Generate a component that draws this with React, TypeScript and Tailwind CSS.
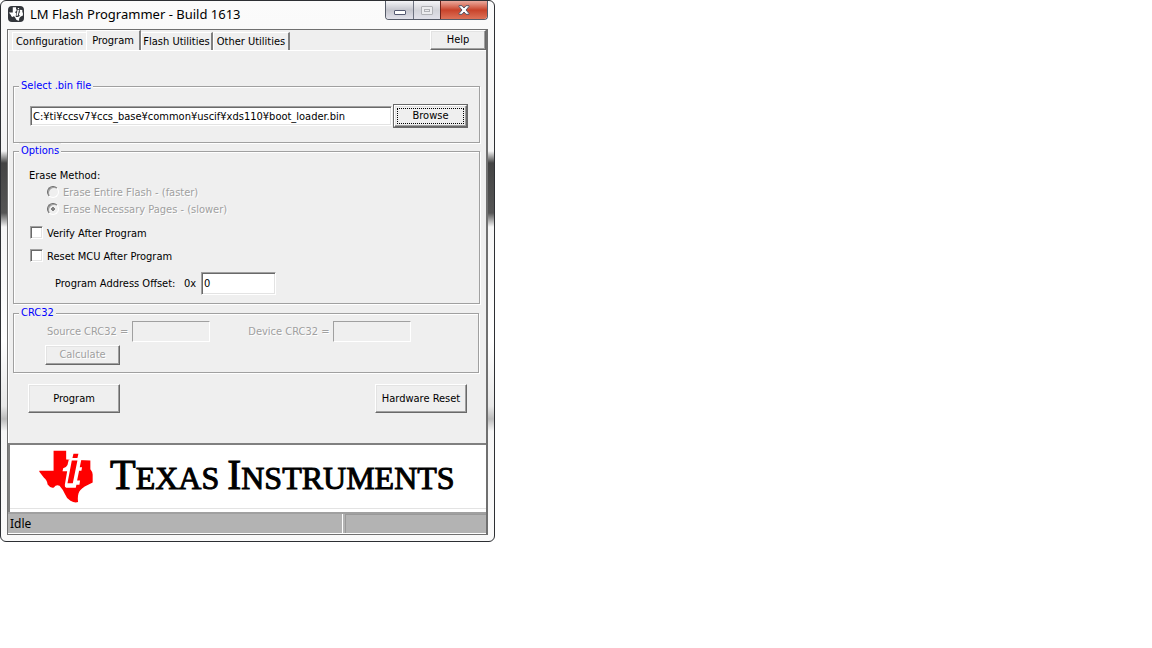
import type { ReactNode } from "react";
import clsx from "clsx";

const TABS = ["Configuration", "Program", "Flash Utilities", "Other Utilities"];

const RAISED =
  "border border-t-white border-l-white border-r-[#696969] border-b-[#696969] bg-[#efefef] shadow-[inset_-1px_-1px_0_#a0a0a0,inset_1px_1px_0_#e3e3e3]";
const SUNKEN =
  "border border-t-[#a0a0a0] border-l-[#a0a0a0] border-r-white border-b-white bg-white shadow-[inset_1px_1px_0_#696969,inset_-1px_-1px_0_#e3e3e3]";
const DISABLED_TEXT = "text-[#a0a0a0] [text-shadow:1px_1px_0_#fff]";

function TexasMark({ className, fill, ink }: { className?: string; fill: string; ink: string }) {
  return (
    <svg viewBox="26 15 163 158" className={className} aria-hidden="true">
      <path
        fill={fill}
        d="M70 16H108V43L181 46V72Q188 80 188 88V112L164 124Q148 134 145 146Q142 158 144 171Q134 175 121 167Q109 160 105 148Q99 134 88 122Q78 117 71 127Q62 131 52 118Q50 104 41 98L27 80V77H70Z"
      />
      <path
        fill={ink}
        d="M124 20H149L145 42H154L149 66H156L154 77H147L141 106H150L148 119H139L137 128H108Q103 126 104 119L111 78H97L99 69Q109 66 112 59L116 43H120Z"
      />
      <path fill={fill} d="M130 25H145L142 38H127ZM125 46H142L128 114H112Z" />
    </svg>
  );
}

function TitleBar() {
  return (
    <header className="flex h-7 items-start justify-between">
      <div className="flex items-center gap-[6px] pt-[5px] pl-px">
        <span className="flex size-4 items-center justify-center rounded-sm bg-[#33363b]">
          <TexasMark className="size-[14px]" fill="#fff" ink="#33363b" />
        </span>
        <h1 className="font-['Noto_Sans',sans-serif] text-[13px] leading-4">LM Flash Programmer - Build 1613</h1>
      </div>
      <div className="flex h-[19px] overflow-hidden rounded-b border border-t-0 border-[#555b68]">
        <button
          type="button"
          aria-label="Minimize"
          className="flex w-7 items-center justify-center border-r border-[#6d7280] bg-linear-to-b from-[#f5f5f8] via-[#c4c5cd] via-50% to-[#e1e1ea]"
        >
          <span className="mt-1 h-[5px] w-3 rounded-[1px] border border-[#555a72] bg-white" />
        </button>
        <button
          type="button"
          disabled
          aria-label="Maximize"
          className="flex w-[26px] items-center justify-center bg-linear-to-b from-[#f5f5f8] via-[#d3d4da] via-50% to-[#e1e1ea]"
        >
          <span className="flex h-[9px] w-3 items-center justify-center rounded-[1px] border border-[#b0b1b6] bg-[#ececef]">
            <span className="h-[3px] w-[6px] border border-[#b0b1b6]" />
          </span>
        </button>
        <button
          type="button"
          aria-label="Close"
          className="flex w-[47px] items-center justify-center border-l border-[#70251c] bg-linear-to-b from-[#eaa99d] via-[#c8422a] via-50% to-[#dd7258]"
        >
          <svg viewBox="0 0 12 10" className="h-[10px] w-3" aria-hidden="true">
            <path
              d="M1 .7H4L6 3L8 .7H11V1.5L8 5L11 8.500V9.300H8L6 7L4 9.300H1V8.500L4 5L1 1.500Z"
              fill="#fff"
              stroke="#535666"
            />
          </svg>
        </button>
      </div>
    </header>
  );
}

function TabBar() {
  return (
    <nav className="flex items-end justify-between">
      <div className="flex flex-1 items-end pl-[3px]" role="tablist">
        {TABS.map((tab) => (
          <button
            key={tab}
            type="button"
            role="tab"
            aria-selected={tab === "Program"}
            className={clsx(
              "border-t border-l border-white whitespace-nowrap",
              tab === "Configuration" && "h-[18px] w-[74px] pt-px",
              tab === "Program" && "h-5 w-[55px] border-r-2 border-r-[#808080]",
              tab === "Flash Utilities" && "h-[18px] w-[72px] border-r-2 border-r-[#808080] pt-px",
              tab === "Other Utilities" && "h-[18px] w-[77px] border-r-2 border-r-[#808080] pt-px",
            )}
          >
            {tab}
          </button>
        ))}
      </div>
      <button type="button" className={clsx(RAISED, "h-5 w-14")}>
        Help
      </button>
    </nav>
  );
}

function Group({ title, className, children }: { title: string; className?: string; children: ReactNode }) {
  return (
    <fieldset
      className={clsx(
        "border border-[#a0a0a0] pl-[14px] shadow-[1px_1px_0_#fff,inset_1px_1px_0_#fff]",
        className,
      )}
    >
      <legend className="-ml-[9px] bg-[#efefef] px-[2px] leading-4 text-[#0000ff]">{title}</legend>
      {children}
    </fieldset>
  );
}

function EraseOption({ label, checked }: { label: string; checked?: boolean }) {
  return (
    <label className={clsx("flex h-[17px] items-center gap-1", DISABLED_TEXT)}>
      <input
        type="radio"
        name="erase"
        disabled
        defaultChecked={checked}
        className="mb-[2px] size-3 appearance-none rounded-full border border-t-[#696969] border-r-white border-b-white border-l-[#696969] bg-[#efefef] shadow-[inset_1px_1px_0_#a0a0a0] checked:bg-[radial-gradient(circle,#808080_2px,transparent_2px)]"
      />
      {label}
    </label>
  );
}

function CheckOption({ label }: { label: string }) {
  return (
    <label className="flex h-[23px] items-center gap-1">
      <input type="checkbox" className={clsx(SUNKEN, "mb-[2px] size-[13px] appearance-none")} />
      {label}
    </label>
  );
}

function CrcField({ id, label }: { id: string; label: string }) {
  return (
    <div className="flex items-center gap-1">
      <label htmlFor={id} className={DISABLED_TEXT}>
        {label}
      </label>
      <input
        id={id}
        disabled
        className="h-[21px] w-[78px] border border-t-[#a0a0a0] border-r-white border-b-white border-l-[#a0a0a0]"
      />
    </div>
  );
}

function ProgramPanel() {
  return (
    <main className="border-t border-white pt-[27px] pr-[6px] pb-[30px] pl-1">
      <Group title="Select .bin file" className="pr-[11px] pb-[14px]">
        <div className="flex items-center gap-px pt-[10px] pl-[2px]">
          <input
            aria-label="Select .bin file"
            defaultValue="C:¥ti¥ccsv7¥ccs_base¥common¥uscif¥xds110¥boot_loader.bin"
            className={clsx(SUNKEN, "h-5 min-w-0 flex-1 px-[2px]")}
          />
          <button type="button" className="h-6 w-[75px] border border-[#696969] bg-[#efefef]">
            <span className={clsx(RAISED, "flex h-full items-center justify-center p-[2px]")}>
              <span className="flex h-full w-full items-center justify-center border border-dotted border-black">
                Browse
              </span>
            </span>
          </button>
        </div>
      </Group>

      <Group title="Options" className="pb-2">
        <p className="pt-[9px] pl-px leading-4">Erase Method:</p>
        <div className="pl-[19px]">
          <EraseOption label="Erase Entire Flash - (faster)" />
          <EraseOption label="Erase Necessary Pages - (slower)" checked />
        </div>
        <div className="pt-1 pl-[2px]">
          <CheckOption label="Verify After Program" />
          <CheckOption label="Reset MCU After Program" />
        </div>
        <div className="flex items-center pt-1 pl-[27px]">
          <label htmlFor="offset" className="w-[129px]">
            Program Address Offset:
          </label>
          <span className="w-[17px]">0x</span>
          <input id="offset" defaultValue="0" className={clsx(SUNKEN, "h-[23px] w-[75px] px-[2px]")} />
        </div>
      </Group>

      <Group title="CRC32" className="mt-px mr-px pb-[7px]">
        <div className="flex gap-[38px] pl-[19px]">
          <CrcField id="source-crc" label="Source CRC32 =" />
          <CrcField id="device-crc" label="Device CRC32 =" />
        </div>
        <button type="button" disabled className={clsx(RAISED, DISABLED_TEXT, "mt-[3px] ml-[17px] block h-5 w-[75px]")}>
          Calculate
        </button>
      </Group>

      <div className="flex justify-between pt-[11px] pr-[13px] pl-[15px]">
        <button type="button" className={clsx(RAISED, "h-[29px] w-[92px]")}>
          Program
        </button>
        <button type="button" className={clsx(RAISED, "h-[29px] w-[92px]")}>
          Hardware Reset
        </button>
      </div>
    </main>
  );
}

function Banner() {
  return (
    <div className="border-t-2 border-l-2 border-[#808080] bg-white">
      <div className="flex h-[64px] items-center gap-[17px] border-b border-[#e3e3e3] pl-[29px]">
        <TexasMark className="h-[53px] w-[54px]" fill="#f00" ink="#fff" />
        <p className="pb-1 font-['Liberation_Serif',serif] text-[32px] leading-none whitespace-nowrap text-black [-webkit-text-stroke:1px_#000]">
          <span className="text-[42px]">T</span>EXAS <span className="text-[42px]">I</span>NSTRUMENTS
        </p>
      </div>
      <div className="h-[3px]" />
    </div>
  );
}

export default function App() {
  return (
    <div className="min-h-screen bg-white font-['DejaVu_Sans_Condensed','Noto_Sans',sans-serif] text-[11px] leading-4 text-black">
      <div className="w-[495px] max-w-full rounded-md border border-[#2d2f33] bg-[linear-gradient(#fbfbfb_0px,#f4f4f4_150px,#444_162px,#555_212px,#f6f6f6_226px,#fff_340px,#e8e8e8_405px,#bbb_418px,#f6f6f6_430px,#fafafa_100%)] px-[6px] pb-[6px]">
        <TitleBar />
        <div className="border-t border-r-2 border-b border-l border-[#707070] bg-[#efefef]">
          <div className="border-l border-white">
            <TabBar />
            <ProgramPanel />
          </div>
          <Banner />
          <footer className="flex h-[22px] gap-[2px] border-t-2 border-b border-t-[#a0a0a0] border-b-white bg-[#b3b3b3] font-['Noto_Sans',sans-serif] text-[12px]">
            <span className="flex w-[335px] items-center border-r border-white pl-[2px]">Idle</span>
            <span className="flex-1 border-t border-l border-[#999]" />
          </footer>
        </div>
      </div>
    </div>
  );
}
